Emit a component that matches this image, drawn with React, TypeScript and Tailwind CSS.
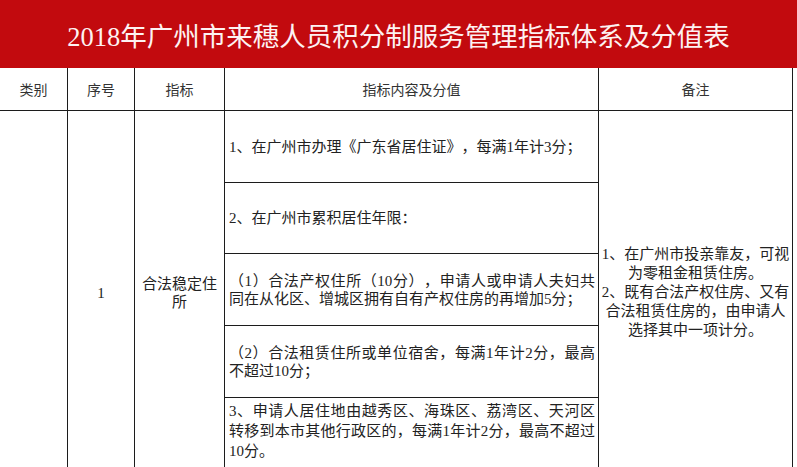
const serif = { fontFamily: '"Liberation Serif", "Noto Sans CJK SC", serif' };

const headers = [
  { label: '类别', w: 'w-[68px]' },
  { label: '序号', w: 'w-[67px]' },
  { label: '指标', w: 'w-[90px]' },
  { label: '指标内容及分值', w: 'w-[374px]' },
  { label: '备注', w: 'w-[194px]' },
];

function ContentRow({ h, children }: { h: string; children: React.ReactNode }) {
  return (
    <div className={`${h} border-b border-[#1c1c1c] pl-[4px] pr-[3px] flex items-center`}>
      <p className="w-full text-justify">{children}</p>
    </div>
  );
}

export default function App() {
  return (
    <div className="w-[797px] h-[467px] overflow-hidden bg-white text-[#222] [text-spacing-trim:space-all]">
      <div
        className="h-[68px] bg-[#c20a0e] flex items-center justify-center pt-[8px] text-[26.5px] text-[#fdf2f2]"
        style={serif}
      >
        2018年广州市来穗人员积分制服务管理指标体系及分值表
      </div>

      <div
        className="flex h-[43px] w-[793px] border-b border-[#1c1c1c] text-[14px] text-[#333]"
        style={{ fontFamily: '"Noto Sans CJK SC", "Noto Sans", sans-serif' }}
      >
        {headers.map((c) => (
          <div key={c.label} className={`${c.w} border-r border-[#1c1c1c] flex items-center justify-center`}>
            {c.label}
          </div>
        ))}
      </div>

      <div className="flex w-[793px] h-[360px] text-[15px]" style={serif}>
        <div className="w-[68px] border-r border-[#1c1c1c]" />
        <div className="w-[67px] border-r border-[#1c1c1c] flex items-center justify-center pt-[4px]">
          1
        </div>
        <div className="w-[90px] border-r border-[#1c1c1c] flex items-center justify-center pt-[4px]">
          <p className="text-center leading-[18px]">合法稳定住所</p>
        </div>
        <div className="w-[374px] border-r border-[#1c1c1c] flex flex-col leading-[18px]">
          <ContentRow h="h-[72px]">1、在广州市办理《广东省居住证》，每满1年计3分；</ContentRow>
          <ContentRow h="h-[71px]">2、在广州市累积居住年限：</ContentRow>
          <ContentRow h="h-[72px]">
            （1）合法产权住所（10分），申请人或申请人夫妇共同在从化区、增城区拥有自有产权住房的再增加5分；
          </ContentRow>
          <ContentRow h="h-[72px]">（2）合法租赁住所或单位宿舍，每满1年计2分，最高不超过10分；</ContentRow>
          <div className="flex-1 pl-[4px] pr-[3px] pt-[3px] leading-[20px]">
            <p className="text-justify">
              3、申请人居住地由越秀区、海珠区、荔湾区、天河区转移到本市其他行政区的，每满1年计2分，最高不超过10分。
            </p>
          </div>
        </div>
        <div className="w-[194px] border-r border-[#1c1c1c] flex flex-col justify-center items-center text-center leading-[19px] pt-[2px]">
          <p>1、在广州市投亲靠友，可视为零租金租赁住房。</p>
          <p>2、既有合法产权住房、又有合法租赁住房的，由申请人选择其中一项计分。</p>
        </div>
      </div>
    </div>
  );
}
